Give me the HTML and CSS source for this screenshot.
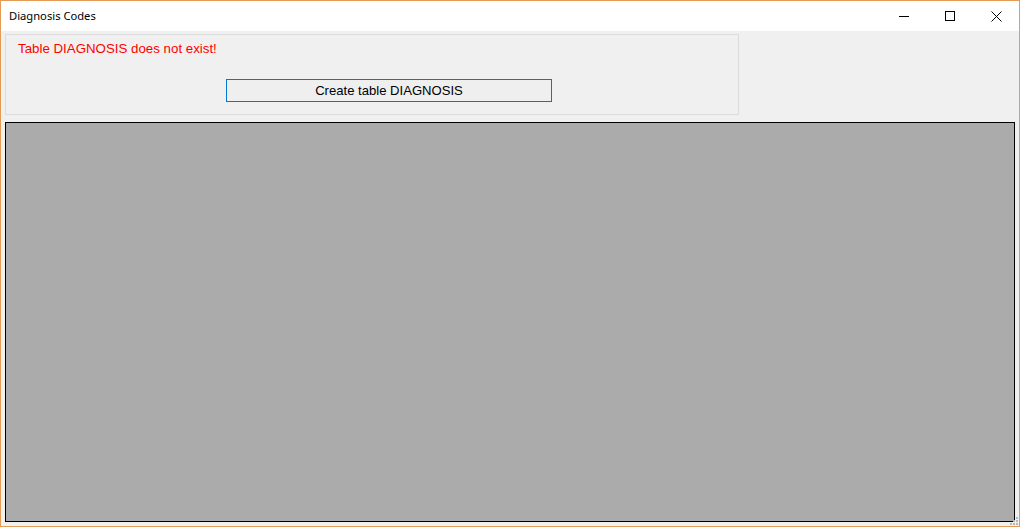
FILE: index.html
```html
<!DOCTYPE html>
<html>
<head>
<meta charset="utf-8">
<title>Diagnosis Codes</title>
<link rel="stylesheet" href="styles.css">
</head>
<body>
<div class="window">
  <div class="titlebar">
    <span class="title">Diagnosis Codes</span>
    <div class="caption">
      <div class="cap-btn">
        <svg width="10" height="10" viewBox="0 0 10 10"><path d="M0 5.5H10" stroke="#000" stroke-width="1"/></svg>
      </div>
      <div class="cap-btn">
        <svg width="10" height="10" viewBox="0 0 10 10"><rect x="0.5" y="0.5" width="9" height="9" fill="none" stroke="#000" stroke-width="1"/></svg>
      </div>
      <div class="cap-btn">
        <svg width="11" height="11" viewBox="0 0 11 11"><path d="M0.5 0.5L10.5 10.5M10.5 0.5L0.5 10.5" stroke="#000" stroke-width="1"/></svg>
      </div>
    </div>
  </div>
  <div class="client">
    <div class="group">
      <div class="message">Table DIAGNOSIS does not exist!</div>
      <div class="btn-row">
        <button class="create-btn">Create table DIAGNOSIS</button>
      </div>
    </div>
    <div class="panel"></div>
    <div class="grip">
      <span class="dot d1"></span><span class="dot d2"></span><span class="dot d3"></span>
      <span class="dot d4"></span><span class="dot d5"></span><span class="dot d6"></span>
    </div>
  </div>
</div>
</body>
</html>
```

FILE: styles.css
```css
html, body {
  margin: 0;
  padding: 0;
  width: 1020px;
  height: 527px;
  overflow: hidden;
  background: #ffffff;
}

.window {
  box-sizing: border-box;
  width: 1020px;
  height: 527px;
  border: 1px solid #e59b56;
  display: flex;
  flex-direction: column;
}

.titlebar {
  height: 30px;
  background: #ffffff;
  display: flex;
  align-items: center;
  justify-content: space-between;
  flex: none;
}

.title {
  font-family: "Noto Sans", "Open Sans", sans-serif;
  font-size: 11.2px;
  color: #000;
  padding-left: 8px;
  padding-bottom: 1px;
}

.caption {
  display: flex;
  height: 30px;
}

.cap-btn {
  width: 46px;
  height: 30px;
  display: flex;
  align-items: center;
  justify-content: center;
}

.client {
  flex: 1;
  background: #f0f0f0;
  padding: 3px 4px 0 4px;
  display: flex;
  flex-direction: column;
  position: relative;
}

.group {
  box-sizing: border-box;
  width: 734px;
  height: 81px;
  border: 1px solid #dcdcdc;
  flex: none;
  padding: 5px 0 0 12px;
}

.message {
  font-family: "Liberation Sans", Arial, sans-serif;
  font-size: 13.3px;
  color: #ff0000;
  line-height: 18px;
}

.btn-row {
  padding-left: 208px;
  padding-top: 21px;
}

.create-btn {
  box-sizing: border-box;
  width: 326px;
  height: 23px;
  border: 1px solid #0078d7;
  background: #efefef;
  font-family: "Liberation Sans", Arial, sans-serif;
  font-size: 13.1px;
  color: #000;
  padding: 0;
  margin: 0;
  line-height: 20px;
  display: block;
}

.panel {
  box-sizing: border-box;
  margin-top: 7px;
  width: 1010px;
  height: 400px;
  background: #ababab;
  border: 1px solid #000000;
  flex: none;
}

.grip {
  position: absolute;
  right: 1px;
  bottom: 1px;
  width: 8px;
  height: 8px;
}

.dot {
  position: absolute;
  width: 2px;
  height: 2px;
  background: #b8b8b8;
}
.d1 { right: 0; top: 0; }
.d2 { right: 0; top: 3px; }
.d3 { right: 0; top: 6px; }
.d4 { right: 3px; top: 3px; }
.d5 { right: 3px; top: 6px; }
.d6 { right: 6px; top: 6px; }
```
